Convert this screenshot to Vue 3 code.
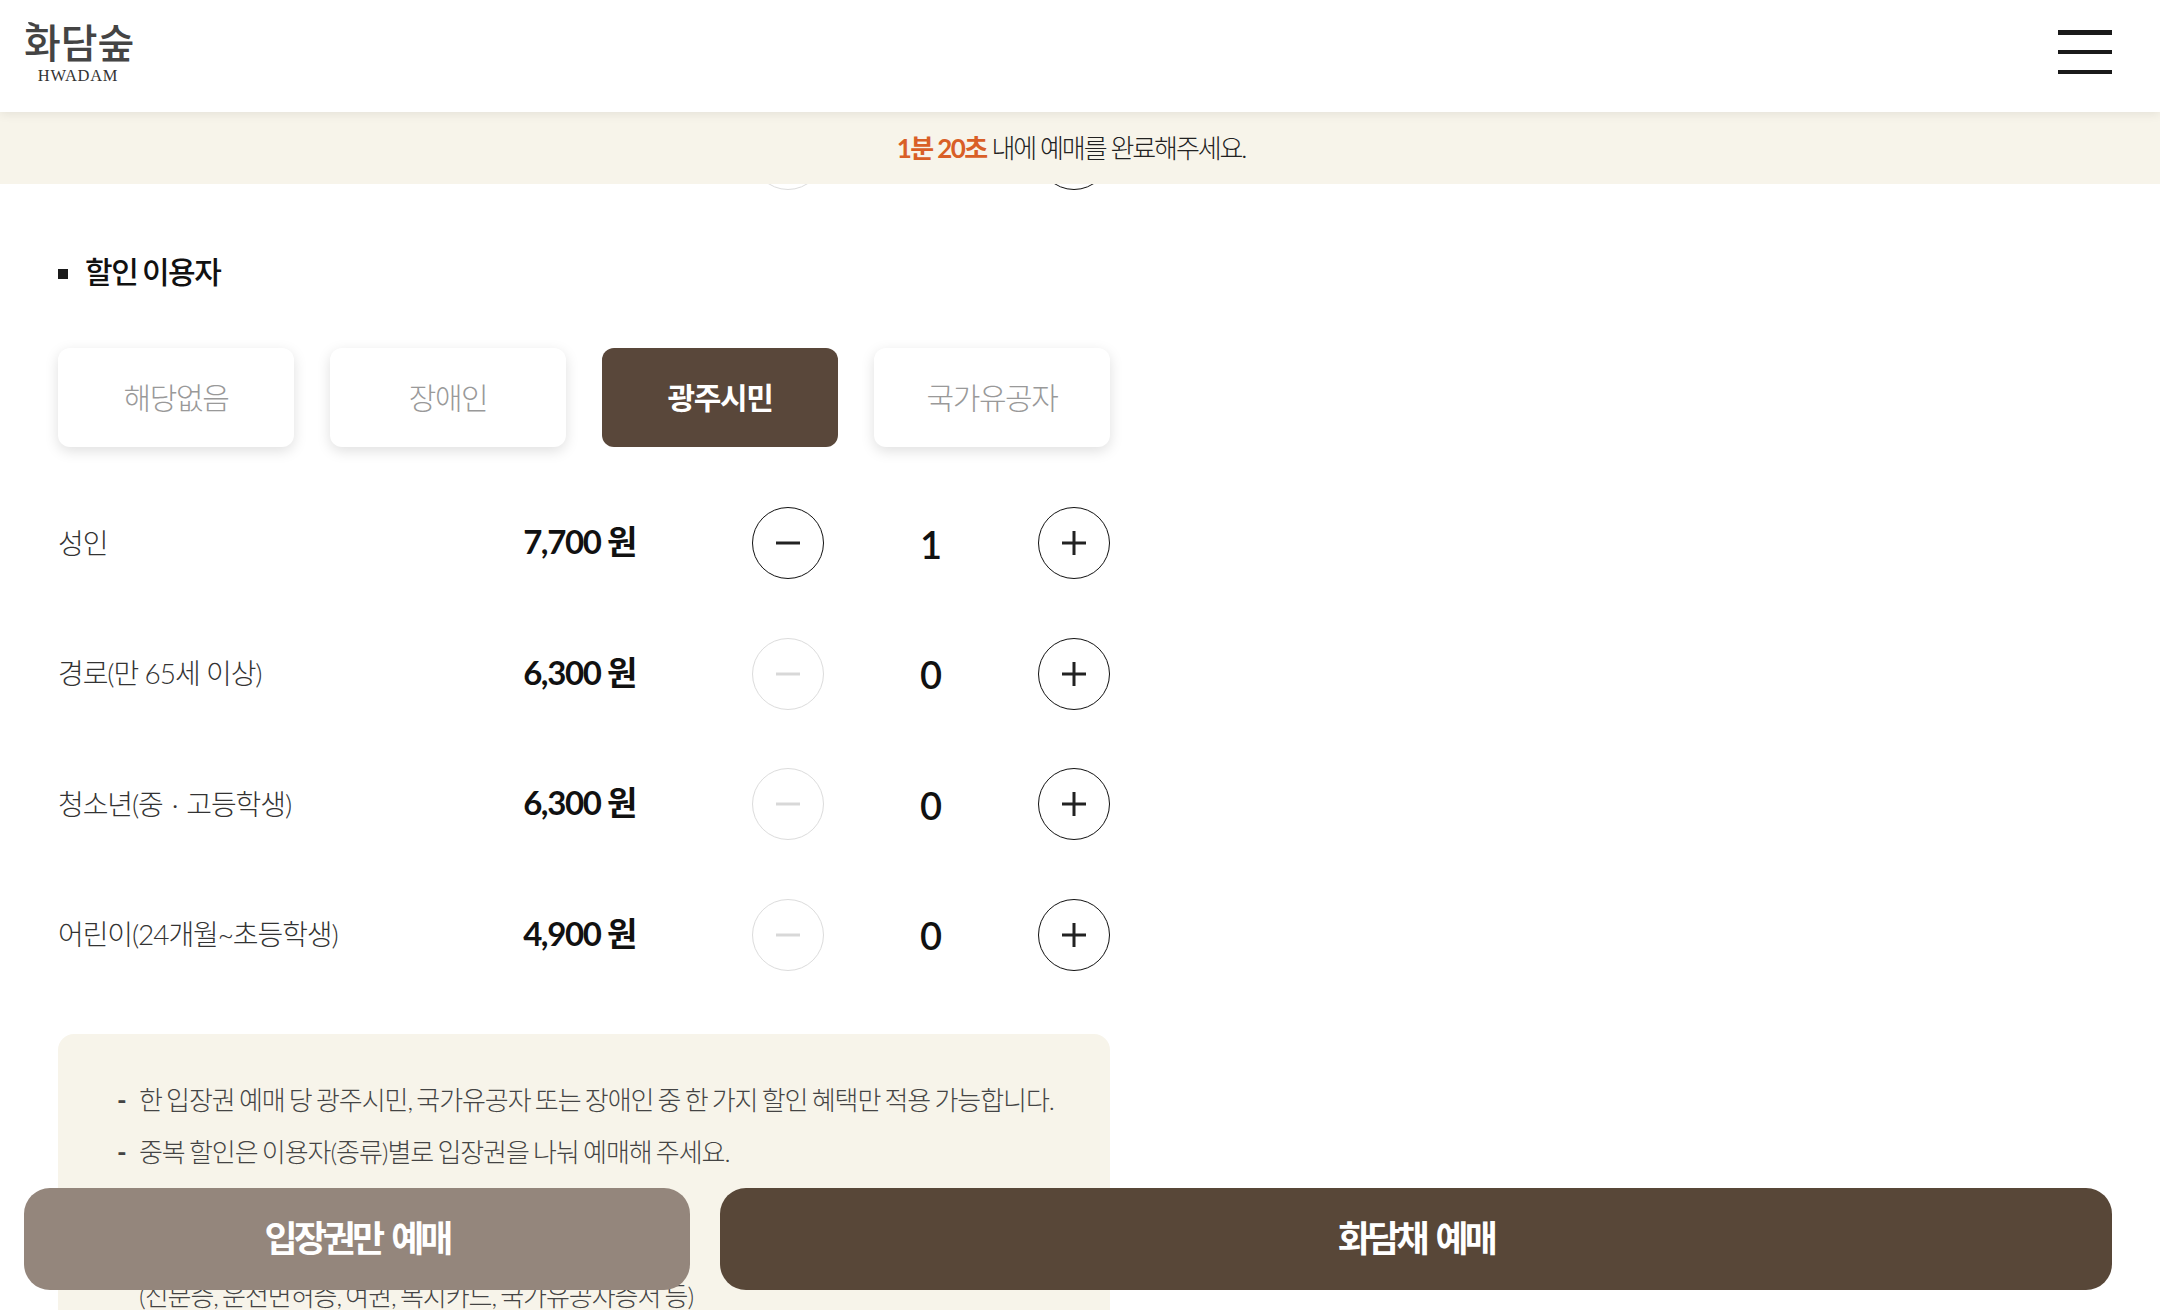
<script setup>
const options = [
  { label: '해당없음', active: false },
  { label: '장애인', active: false },
  { label: '광주시민', active: true },
  { label: '국가유공자', active: false },
]
const rows = [
  { name: '성인', price: '7,700 원', count: 1 },
  { name: '경로(만 65세 이상)', price: '6,300 원', count: 0 },
  { name: '청소년(중 \u2009·\u2009 고등학생)', price: '6,300 원', count: 0 },
  { name: '어린이(24개월~초등학생)', price: '4,900 원', count: 0 },
]
</script>

<template>
  <div class="page">
    <header class="header">
      <div class="logo">
        <div class="logo-ko">화담숲</div>
        <div class="logo-en">HWADAM</div>
      </div>
      <button class="menu" aria-label="메뉴"><i></i><i></i><i></i></button>
    </header>
    <div class="notice"><b>1분 20초</b> 내에 예매를 완료해주세요.</div>

    <main class="main">
      <div class="peek">
        <span class="circle off"></span>
        <span class="circle"></span>
      </div>
      <h2 class="title">할인 이용자</h2>
      <div class="options">
        <button v-for="o in options" :key="o.label" class="option" :class="{ active: o.active }">{{ o.label }}</button>
      </div>
      <div class="rows">
        <div v-for="r in rows" :key="r.name" class="row">
          <span class="name">{{ r.name }}</span>
          <span class="price">{{ r.price }}</span>
          <div class="stepper">
            <button class="circle" :class="{ off: r.count === 0 }" aria-label="빼기">
              <svg width="26" height="26" viewBox="0 0 26 26"><path d="M1 13h24" stroke="currentColor" stroke-width="3" fill="none" /></svg>
            </button>
            <span class="count">{{ r.count }}</span>
            <button class="circle" aria-label="더하기">
              <svg width="26" height="26" viewBox="0 0 26 26"><path d="M1 13h24M13 1v24" stroke="currentColor" stroke-width="3" fill="none" /></svg>
            </button>
          </div>
        </div>
      </div>
      <div class="note">
        <p class="line"><span class="dash">-</span>한 입장권 예매 당 광주시민, 국가유공자 또는 장애인 중 한 가지 할인 혜택만 적용 가능합니다.</p>
        <p class="line"><span class="dash">-</span>중복 할인은 이용자(종류)별로 입장권을 나눠 예매해 주세요.</p>
        <p class="line last">(신분증, 운전면허증, 여권, 복지카드, 국가유공자증서 등)</p>
      </div>
    </main>

    <div class="actions">
      <button class="action light">입장권만 예매</button>
      <button class="action dark">화담채 예매</button>
    </div>
  </div>
</template>

<style>
html, body { margin: 0; background: #fff; }
</style>

<style scoped>
.page {
  position: relative;
  width: 2160px;
  height: 1310px;
  overflow: hidden;
  background: #fff;
  color: #1a1a1a;
  font-family: Lato, "Noto Sans CJK KR", sans-serif;
  font-weight: 300;
}
button { font-family: inherit; border: 0; padding: 0; background: none; }
.header {
  position: relative;
  z-index: 3;
  height: 112px;
  box-sizing: border-box;
  padding: 0 48px 0 24px;
  display: flex;
  align-items: center;
  justify-content: space-between;
  background: #fff;
  box-shadow: 0 2px 10px rgba(0, 0, 0, 0.08);
}
.logo { position: relative; margin-top: -9px; width: 108px; text-align: center; color: #444; }
.logo::before {
  content: "";
  position: absolute;
  left: 4px;
  top: 3px;
  width: 9px;
  height: 5px;
  background: #444;
  border-radius: 0 100% 0 100%;
}
.logo-ko {
  font-family: "Noto Sans CJK KR", sans-serif;
  font-weight: 500;
  font-size: 40px;
  line-height: 44px;
  white-space: nowrap;
}
.logo-en {
  margin-top: 4px;
  font-family: "Liberation Serif", serif;
  font-weight: 400;
  font-size: 16.5px;
  line-height: 17px;
  letter-spacing: 0.7px;
  color: #333;
}
.menu {
  width: 54px;
  height: 44px;
  display: flex;
  flex-direction: column;
  justify-content: space-between;
  margin-top: -8px;
}
.menu i { display: block; height: 4.5px; background: #1a1a1a; }
.notice {
  position: relative;
  z-index: 2;
  height: 72px;
  box-sizing: border-box;
  padding: 0 18px 3px 0;
  display: flex;
  align-items: center;
  justify-content: center;
  white-space: pre;
  background: #f7f4ea;
  font-size: 26px;
  letter-spacing: -2.1px;
  color: #222;
}
.notice b { color: #d95f27; font-weight: 700; letter-spacing: -1.6px; }
.main {
  margin-top: -66px;
  padding: 0 0 0 58px;
  width: 1052px;
}
.peek {
  height: 72px;
  display: flex;
  justify-content: flex-end;
  gap: 214px;
}
.peek .circle { flex: none; }
.title {
  margin: 59px 0 0;
  padding-left: 27px;
  position: relative;
  font-size: 30px;
  line-height: 44px;
  font-weight: 500;
  letter-spacing: -1.45px;
  word-spacing: -1.5px;
  color: #111;
}
.title::before {
  content: "";
  position: absolute;
  left: 0;
  top: 20px;
  width: 10px;
  height: 10px;
  background: #1a1a1a;
}
.options {
  margin-top: 55px;
  display: grid;
  grid-template-columns: repeat(4, 236px);
  column-gap: 36px;
}
.option {
  height: 99px;
  padding-bottom: 4px;
  border-radius: 12px;
  background: #fff;
  box-shadow: 0 4px 14px rgba(0, 0, 0, 0.13);
  font-size: 30px;
  font-weight: 300;
  letter-spacing: -1.4px;
  color: #999;
}
.option.active {
  background: #59473a;
  box-shadow: none;
  color: #fff;
  font-weight: 700;
}
.rows {
  margin-top: 60px;
  display: flex;
  flex-direction: column;
  gap: 58.5px;
}
.row {
  display: flex;
  align-items: center;
  height: 72px;
}
.name {
  width: 430px;
  font-size: 28px;
  letter-spacing: -1.1px;
  color: #333;
  margin-top: -3px;
  white-space: pre;
}
.price {
  width: 148px;
  text-align: right;
  font-size: 33px;
  font-weight: 700;
  letter-spacing: -1.4px;
  color: #111;
  margin-top: -6px;
}
.stepper {
  margin-left: auto;
  width: 358px;
  display: flex;
  align-items: center;
  justify-content: space-between;
}
.circle {
  box-sizing: border-box;
  width: 72px;
  height: 72px;
  border: 1.5px solid #111;
  border-radius: 50%;
  display: flex;
  align-items: center;
  justify-content: center;
  color: #222;
  background: #fff;
}
.circle.off { border-color: #dcdcdc; color: #d8d8d8; }
.count { font-size: 38px; font-weight: 600; color: #111; margin-top: 1px; }
.note {
  margin-top: 63px;
  padding: 48px 40px 0 59px;
  height: 300px;
  box-sizing: border-box;
  background: #f7f4ea;
  border-radius: 16px 16px 0 0;
}
.line {
  position: relative;
  margin: 0 0 16px;
  padding-left: 22px;
  font-size: 26px;
  line-height: 36px;
  letter-spacing: -1.05px;
  word-spacing: -1.8px;
  color: #444;
  white-space: nowrap;
}
.line.last { margin-top: 108px; }
.dash { position: absolute; left: 0; font-weight: 700; }
.actions {
  position: absolute;
  z-index: 4;
  left: 24px;
  right: 48px;
  bottom: 20px;
  display: grid;
  grid-template-columns: 666px 1fr;
  column-gap: 30px;
}
.action {
  height: 102px;
  padding-bottom: 6px;
  border-radius: 26px;
  color: #fff;
  font-size: 36px;
  font-weight: 700;
  letter-spacing: -3.9px;
  word-spacing: 5px;
}
.action.light { background: #94867c; }
.action.dark { background: #584738; }
</style>
